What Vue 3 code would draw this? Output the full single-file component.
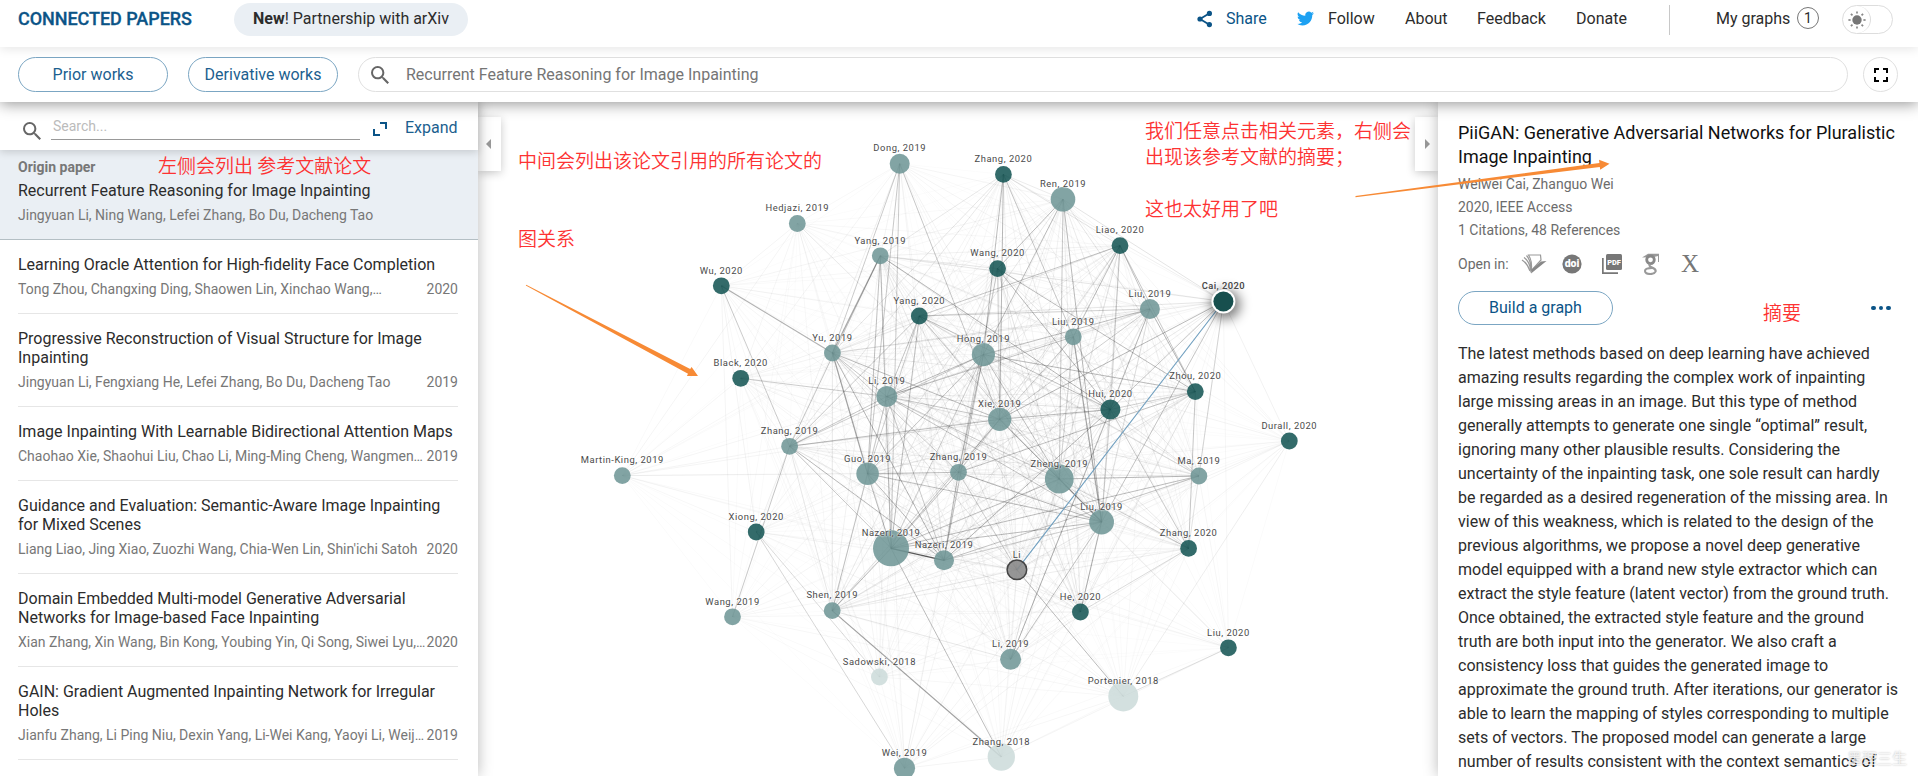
<template>
  <div class="page">
    <header class="topbar">
      <a class="brand">CONNECTED PAPERS</a>
      <a class="news"><b>New</b>! Partnership with arXiv</a>
      <nav class="nav">
        <a class="nav-link share">
          <svg width="16" height="18" viewBox="0 0 16 18">
            <path d="M12.5 3.2 3 9l9.5 5.8" fill="none" stroke="#0b5487" stroke-width="1.8" />
            <circle cx="12.4" cy="3.4" r="2.6" fill="#0b5487" />
            <circle cx="3" cy="9" r="2.6" fill="#0b5487" />
            <circle cx="12.4" cy="14.6" r="2.6" fill="#0b5487" />
          </svg>
          <span>Share</span>
        </a>
        <a class="nav-link follow">
          <svg width="17" height="17" viewBox="0 0 24 24">
            <path fill="#1da1f2" d="M23.95 4.57a10 10 0 0 1-2.82.77 4.96 4.96 0 0 0 2.16-2.72c-.95.55-2 .95-3.13 1.18a4.92 4.92 0 0 0-8.38 4.48C7.69 8.1 4.07 6.13 1.64 3.16a4.92 4.92 0 0 0 1.52 6.57 4.9 4.9 0 0 1-2.23-.61v.06a4.92 4.92 0 0 0 3.95 4.83 5 5 0 0 1-2.21.08 4.94 4.94 0 0 0 4.6 3.42A9.87 9.87 0 0 1 0 19.54a13.99 13.99 0 0 0 7.56 2.21c9.05 0 13.99-7.5 13.99-13.98 0-.21 0-.42-.02-.63a9.94 9.94 0 0 0 2.42-2.57z" />
          </svg>
          <span>Follow</span>
        </a>
        <a class="nav-link about">About</a>
        <a class="nav-link feedback">Feedback</a>
        <a class="nav-link donate">Donate</a>
        <span class="divider"></span>
        <a class="nav-link my-graphs">My graphs</a>
        <span class="count">1</span>
        <div class="theme-toggle">
          <div class="knob">
            <svg width="20" height="20" viewBox="-10 -10 20 20">
              <circle r="4.7" fill="#777" />
              <line v-for="n in 8" :key="n" x1="0" y1="-6.4" x2="0" y2="-8.6" stroke="#888" stroke-width="1.7" :transform="`rotate(${n * 45})`" />
            </svg>
          </div>
        </div>
      </nav>
    </header>

    <div class="toolbar">
      <button class="pill-btn">Prior works</button>
      <button class="pill-btn">Derivative works</button>
      <div class="search-box">
        <svg width="18" height="18" viewBox="3 3 17.5 17.5"><path :d="searchPath" fill="#666" /></svg>
        <span>Recurrent Feature Reasoning for Image Inpainting</span>
      </div>
      <button class="fullscreen">
        <svg width="14" height="14" viewBox="0 0 14 14">
          <path d="M1 5V1h4M9 1h4v4M13 9v4H9M5 13H1V9" fill="none" stroke="#000" stroke-width="2" />
        </svg>
      </button>
    </div>

    <main class="content">
      <aside class="sidebar">
        <div class="filter">
          <svg class="filter-icon" width="18" height="18" viewBox="3 3 17.5 17.5"><path :d="searchPath" fill="#666" /></svg>
          <div class="filter-input">Search...</div>
          <svg class="expand-icon" width="14" height="14" viewBox="0 0 14 14">
            <path d="M7 1h6v6M1 7v6h6" fill="none" stroke="#0b5487" stroke-width="2" />
          </svg>
          <a class="expand">Expand</a>
        </div>
        <div class="origin">
          <div class="origin-label">Origin paper</div>
          <div class="paper-title">Recurrent Feature Reasoning for Image Inpainting</div>
          <div class="paper-meta"><span>Jingyuan Li, Ning Wang, Lefei Zhang, Bo Du, Dacheng Tao</span></div>
        </div>
        <div class="papers">
          <div v-for="paper in papers" :key="paper.authors" class="paper">
            <div v-for="line in paper.title" :key="line" class="paper-title">{{ line }}</div>
            <div class="paper-meta">
              <span>{{ paper.authors }}</span>
              <span>{{ paper.year }}</span>
            </div>
          </div>
        </div>
      </aside>

      <section class="graph">
        <svg width="960" height="674" viewBox="478 102 960 674">
          <defs>
            <filter id="glow" x="-100%" y="-100%" width="300%" height="300%">
              <feGaussianBlur stdDeviation="6" />
            </filter>
          </defs>
          <line
            v-for="(edge, i) in edges"
            :key="i"
            :x1="edge.a.x"
            :y1="edge.a.y"
            :x2="edge.b.x"
            :y2="edge.b.y"
            stroke="#222"
            :stroke-opacity="edge.opacity"
            :stroke-width="edge.width"
          />
          <line :x1="byId.cai.x" :y1="byId.cai.y" :x2="byId.origin.x" :y2="byId.origin.y" stroke="#6f9fc0" stroke-width="1.1" />
          <circle :cx="byId.cai.x + 2" :cy="byId.cai.y + 3" r="15" fill="#000" opacity="0.5" filter="url(#glow)" />
          <circle :cx="byId.cai.x" :cy="byId.cai.y" r="12" fill="#fff" />
          <circle
            v-for="node in nodes"
            :key="node.id"
            :cx="node.x"
            :cy="node.y"
            :r="node.r"
            :class="['node', node.tone]"
          />
          <text
            v-for="node in nodes"
            :key="node.id + '-label'"
            :x="node.x"
            :y="node.y - 12.3"
            :class="['node-label', { selected: node.id === 'cai' }]"
          >{{ node.label }}</text>
        </svg>
        <button class="tab tab-left"><i class="caret caret-left"></i></button>
        <button class="tab tab-right"><i class="caret caret-right"></i></button>
      </section>

      <aside class="details">
        <h1><span>PiiGAN: Generative Adversarial Networks for Pluralistic</span><br />Image Inpainting</h1>
        <div class="detail-line">Weiwei Cai, Zhanguo Wei</div>
        <div class="detail-line">2020, IEEE Access</div>
        <div class="detail-line">1 Citations, 48 References</div>
        <div class="open-in">
          <span class="open-label">Open in:</span>
          <svg width="26" height="20" viewBox="0 0 26 20">
            <path d="M1 6q5 3 8 11M3 3.500q5 3 7 13M5.500 1.500q4 4 5 14" fill="none" stroke="#999" stroke-width="1.3" />
            <path d="M7.500 1h12l.5 5-10 11Q12 8 7.500 1z" fill="#fff" stroke="#999" stroke-width="1.2" />
            <path d="m10 19.500 15.500-12.500-5.500.5-9.500 8z" fill="#888" />
          </svg>
          <svg class="doi" width="20" height="20" viewBox="0 0 20 20">
            <circle cx="10" cy="10" r="9.6" fill="#777" />
            <text x="10" y="13.4" text-anchor="middle" font-size="10.5" font-weight="900" fill="#fff">doi</text>
          </svg>
          <svg class="pdf" width="20" height="20" viewBox="0 0 20 20">
            <path d="M.8 4v15.200H16" fill="none" stroke="#777" stroke-width="1.8" />
            <rect x="4" y="0" width="16" height="16" rx="1.5" fill="#777" />
            <text x="12" y="10.6" text-anchor="middle" font-size="7.4" font-weight="900" fill="#fff">PDF</text>
          </svg>
          <svg class="scholar" width="18" height="22" viewBox="0 0 18 22">
            <path d="M0 4.500 6 .8h11V9h-1V3l-4 1z" fill="#999" />
            <circle cx="8.500" cy="6.800" r="3.800" fill="#fff" stroke="#888" stroke-width="2.8" />
            <path d="M8 11q-1.500 2 1.500 3.200 5 2 4 4.500-1 2.300-5 2.300-5.500 0-5.500-3 0-3 7-3" fill="none" stroke="#999" stroke-width="2.1" />
          </svg>
          <span class="xmark">X</span>
        </div>
        <div class="actions">
          <button class="build">Build a graph</button>
          <span class="dots"><i></i><i></i><i></i></span>
        </div>
        <div class="abstract">
          <div v-for="line in abstractLines" :key="line">{{ line }}</div>
        </div>
      </aside>
    </main>

    <!-- annotations drawn over the page -->
    <div class="note note-sidebar">左侧会列出 参考文献论文</div>
    <div class="note note-graph">中间会列出该论文引用的所有论文的</div>
    <div class="note note-relation">图关系</div>
    <div class="note note-click">我们任意点击相关元素，右侧会<br />出现该参考文献的摘要；<br /><br />这也太好用了吧</div>
    <div class="note note-abstract">摘要</div>
    <svg class="arrows" width="1918" height="776" viewBox="0 0 1918 776">
      <path d="M525.800 285.600 688 373.800 686.900 376 698 376 691.600 366.900 690.200 369 526.200 284.800z" fill="#f78a35" />
      <path d="M1355.500 196 1599.400 163.100 1599 159.800 1609.500 163.700 1600.200 169.800 1599.800 167 1355.500 197.200z" fill="#f78a35" />
    </svg>
    <div class="watermark">墨理三生</div>
  </div>
</template>

<script setup>
const searchPath = 'M15.5 14h-.79l-.28-.27A6.47 6.47 0 0 0 16 9.500 6.500 6.500 0 1 0 9.500 16c1.610 0 3.090-.59 4.230-1.570l.27.28v.79l5 4.990L20.490 19l-4.990-5zm-6 0C7.010 14 5 11.990 5 9.500S7.010 5 9.500 5 14 7.010 14 9.500 11.990 14 9.500 14z'

const papers = [
  { title: ['Learning Oracle Attention for High-fidelity Face Completion'], authors: 'Tong Zhou, Changxing Ding, Shaowen Lin, Xinchao Wang,…', year: 2020 },
  { title: ['Progressive Reconstruction of Visual Structure for Image', 'Inpainting'], authors: 'Jingyuan Li, Fengxiang He, Lefei Zhang, Bo Du, Dacheng Tao', year: 2019 },
  { title: ['Image Inpainting With Learnable Bidirectional Attention Maps'], authors: 'Chaohao Xie, Shaohui Liu, Chao Li, Ming-Ming Cheng, Wangmen…', year: 2019 },
  { title: ['Guidance and Evaluation: Semantic-Aware Image Inpainting', 'for Mixed Scenes'], authors: "Liang Liao, Jing Xiao, Zuozhi Wang, Chia-Wen Lin, Shin'ichi Satoh", year: 2020 },
  { title: ['Domain Embedded Multi-model Generative Adversarial', 'Networks for Image-based Face Inpainting'], authors: 'Xian Zhang, Xin Wang, Bin Kong, Youbing Yin, Qi Song, Siwei Lyu,…', year: 2020 },
  { title: ['GAIN: Gradient Augmented Inpainting Network for Irregular', 'Holes'], authors: 'Jianfu Zhang, Li Ping Niu, Dexin Yang, Li-Wei Kang, Yaoyi Li, Weij…', year: 2019 },
]

const abstractLines = [
  'The latest methods based on deep learning have achieved',
  'amazing results regarding the complex work of inpainting',
  'large missing areas in an image. But this type of method',
  'generally attempts to generate one single “optimal” result,',
  'ignoring many other plausible results. Considering the',
  'uncertainty of the inpainting task, one sole result can hardly',
  'be regarded as a desired regeneration of the missing area. In',
  'view of this weakness, which is related to the design of the',
  'previous algorithms, we propose a novel deep generative',
  'model equipped with a brand new style extractor which can',
  'extract the style feature (latent vector) from the ground truth.',
  'Once obtained, the extracted style feature and the ground',
  'truth are both input into the generator. We also craft a',
  'consistency loss that guides the generated image to',
  'approximate the ground truth. After iterations, our generator is',
  'able to learn the mapping of styles corresponding to multiple',
  'sets of vectors. The proposed model can generate a large',
  'number of results consistent with the context semantics of',
]

// id, label, x, y, radius, tone
const nodes = [
  ['dong', 'Dong, 2019', 899.7, 163.7, 10, 'mid'],
  ['hedjazi', 'Hedjazi, 2019', 797.3, 223.5, 8.4, 'mid'],
  ['wu', 'Wu, 2020', 721.3, 285.8, 8.4, 'dark'],
  ['yang19', 'Yang, 2019', 880.3, 255.8, 8.4, 'mid'],
  ['yang20', 'Yang, 2020', 919.3, 316, 8.4, 'dark'],
  ['yu', 'Yu, 2019', 832.4, 353, 8.4, 'mid'],
  ['black', 'Black, 2020', 740.7, 378.3, 8.4, 'dark'],
  ['li19', 'Li, 2019', 886.8, 396.5, 10.5, 'mid'],
  ['zhang20', 'Zhang, 2020', 1003.4, 174.4, 8.4, 'dark'],
  ['ren', 'Ren, 2019', 1063, 199.3, 12.3, 'mid'],
  ['liao', 'Liao, 2020', 1120, 245.6, 8.4, 'dark'],
  ['wang20', 'Wang, 2020', 997.6, 268.6, 8.4, 'dark'],
  ['liuB', 'Liu, 2019', 1149.9, 309, 10, 'mid'],
  ['liuC', 'Liu, 2019', 1073.3, 336.8, 8.4, 'mid'],
  ['cai', 'Cai, 2020', 1223.4, 301.5, 10, 'picked'],
  ['hong', 'Hong, 2019', 983.4, 354.6, 11.6, 'mid'],
  ['xie', 'Xie, 2019', 999.7, 419.3, 11.6, 'mid'],
  ['hui', 'Hui, 2020', 1110.4, 409.5, 10, 'dark'],
  ['zhou', 'Zhou, 2020', 1195.3, 391.6, 8.4, 'dark'],
  ['durall', 'Durall, 2020', 1289.3, 441, 8.4, 'dark'],
  ['martin', 'Martin-King, 2019', 622.3, 475.6, 8.4, 'mid'],
  ['zhangA', 'Zhang, 2019', 789.6, 446.3, 8.4, 'mid'],
  ['guo', 'Guo, 2019', 867.6, 473.8, 11.3, 'mid'],
  ['zhangB', 'Zhang, 2019', 958.5, 472.3, 8.4, 'mid'],
  ['zheng', 'Zheng, 2019', 1059.3, 479, 14.4, 'mid'],
  ['ma', 'Ma, 2019', 1198.9, 476, 8.4, 'mid'],
  ['liuD', 'Liu, 2019', 1101.6, 522, 12.4, 'mid'],
  ['xiong', 'Xiong, 2020', 756.2, 532, 8.4, 'dark'],
  ['nazeri', 'Nazeri, 2019', 891, 548.3, 18, 'mid'],
  ['nazeriB', 'Nazeri, 2019', 944, 560.3, 10, 'mid'],
  ['zhang20B', 'Zhang, 2020', 1188.6, 548.4, 8.4, 'dark'],
  ['origin', 'Li', 1016.9, 569.8, 9.8, 'root'],
  ['wang19', 'Wang, 2019', 732.5, 616.8, 8.4, 'mid'],
  ['shen', 'Shen, 2019', 832.2, 610.6, 8.4, 'mid'],
  ['he', 'He, 2020', 1080.4, 612, 8.4, 'dark'],
  ['sadowski', 'Sadowski, 2018', 879.4, 677, 8.4, 'light'],
  ['li19B', 'Li, 2019', 1010.6, 659.3, 10.5, 'mid'],
  ['liu20', 'Liu, 2020', 1228.4, 647.8, 8.4, 'dark'],
  ['portenier', 'Portenier, 2018', 1123.3, 696.4, 15, 'light'],
  ['zhang18', 'Zhang, 2018', 1001.3, 757, 13.7, 'light'],
  ['wei', 'Wei, 2019', 904.5, 768.3, 10.6, 'mid'],
].map(([id, label, x, y, r, tone]) => ({ id, label, x, y, r, tone }))

const byId = Object.fromEntries(nodes.map((n) => [n.id, n]))

// closely related papers get a visibly darker line
const related = {
  dong: 'yu guo nazeri xie',
  wu: 'yu zhangA',
  yang19: 'yu zhangA guo nazeri hui',
  yang20: 'zhangA guo li19 liao hui nazeri liuB zheng',
  yu: 'guo li19 xie nazeriB zhangB',
  black: 'li19',
  li19: 'hong xie guo nazeriB zheng liuC zhangA liuD',
  zhang20: 'hong xie liuC',
  ren: 'wang20 yang20 hong zheng liuD',
  liao: 'hui zhou liuC liuB',
  wang20: 'xie zhou hui li19 yu zhangB',
  liuC: 'hui liuD zheng xie',
  liuB: 'hui xie zhou hong',
  cai: 'hui xie liuD',
  hong: 'guo nazeri zhangB nazeriB zheng zhangA zhou',
  xie: 'zheng liuD zhangB nazeri zhangA hui',
  hui: 'zhou zhang20B liuD li19B nazeriB',
  zhou: 'zhang20B zhangB',
  zhangA: 'nazeri nazeriB wang19',
  guo: 'nazeri nazeriB zhangB liuD shen',
  zhangB: 'nazeri nazeriB liuD origin',
  zheng: 'liuD nazeri zhang20B ma',
  liuD: 'nazeri nazeriB li19B he',
  ma: 'nazeri nazeriB',
  nazeri: 'shen zhang18',
  origin: 'portenier zhang20B',
}
const strong = { 'nazeri-nazeriB': 0.75, 'shen-zhang18': 0.42, 'yu-guo': 0.4, 'wu-yu': 0.35, 'zheng-liuD': 0.4, 'yang19-yu': 0.4, 'liuC-liuD': 0.4 }
const faint = { 'xiong-wei': 0.18, 'xiong-sadowski': 0.16, 'zhang20B-he': 0.16, 'liu20-portenier': 0.14, 'cai-durall': 0.06, 'durall-portenier': 0.08 }
const outer = ['martin', 'durall', 'liu20', 'wei', 'sadowski', 'wang19', 'hedjazi', 'portenier', 'wu', 'black', 'xiong', 'zhang18', 'dong']

const edges = []
nodes.forEach((a, i) => {
  nodes.slice(i + 1).forEach((b, j) => {
    const key = `${a.id}-${b.id}`
    const dist = Math.hypot(a.x - b.x, a.y - b.y)
    const seed = ((i * 37 + (i + j + 1) * 61 + i * j * 13) % 23) / 23
    if (strong[key]) {
      edges.push({ a, b, opacity: strong[key], width: 1.2 })
    } else if (related[a.id]?.split(' ').includes(b.id)) {
      edges.push({ a, b, opacity: 0.2 + seed * 0.13, width: 1 })
    } else if (faint[key]) {
      edges.push({ a, b, opacity: faint[key], width: 1 })
    } else if (dist < 430) {
      const isOuter = outer.includes(a.id) || outer.includes(b.id)
      edges.push({ a, b, opacity: (isOuter ? 0.015 : 0.03) + seed * seed * (isOuter ? 0.04 : 0.1), width: 1 })
    }
  })
})
</script>

<style>
body {
  overflow: hidden;
  background: #fff;
}
</style>

<style scoped>
.page {
  position: relative;
  width: 1918px;
  height: 776px;
  overflow: hidden;
  display: flex;
  flex-direction: column;
  font-family: Roboto, "Noto Sans CJK SC", sans-serif;
  font-size: 16px;
  color: #2c2c2c;
  background: #fff;
  white-space: nowrap;
}

button {
  font: inherit;
  padding: 0;
  box-sizing: border-box;
  background: #fff;
}

/* top bar */
.topbar {
  position: relative;
  z-index: 4;
  flex: none;
  box-sizing: border-box;
  height: 47px;
  padding: 3px 25px 11px 18px;
  display: flex;
  align-items: center;
  background: #fff;
  box-shadow: 0 2px 10px rgba(0, 0, 0, 0.1);
}

.brand {
  width: 216px;
  padding-bottom: 2px;
  font-size: 18px;
  font-weight: 500;
  -webkit-text-stroke: 0.3px #0b5487;
  letter-spacing: -0.05px;
  color: #0b5487;
}

.news {
  width: 234px;
  height: 33px;
  line-height: 32px;
  border-radius: 17px;
  text-align: center;
  background: #eaeff4;
}

.nav {
  flex: 1;
  display: flex;
  align-items: center;
  justify-content: flex-end;
}

.nav-link {
  display: flex;
  align-items: center;
  padding-bottom: 2px;
}

.share {
  width: 100px;
  gap: 13px;
  color: #0b5487;
}

.follow {
  width: 108px;
  gap: 14px;
}

.about { width: 72px; }
.feedback { width: 99px; }
.donate { width: 93px; }

.divider {
  width: 1px;
  height: 30px;
  margin-right: 46px;
  background: #c8c8c8;
}

.my-graphs { width: 81px; }

.count {
  box-sizing: border-box;
  width: 22px;
  height: 22px;
  margin: 0 23px 3px 0;
  line-height: 20px;
  text-align: center;
  font-size: 14px;
  border: 1px solid #777;
  border-radius: 50%;
}

.theme-toggle {
  box-sizing: border-box;
  width: 51px;
  height: 29px;
  border: 1px solid #ddd;
  border-radius: 15px;
}

.knob {
  box-sizing: border-box;
  width: 28px;
  height: 27px;
  display: flex;
  align-items: center;
  justify-content: center;
  border-right: 1px solid #ddd;
  border-radius: 50%;
}

.knob svg {
  flex: none;
}

/* toolbar */
.toolbar {
  position: relative;
  z-index: 3;
  flex: none;
  box-sizing: border-box;
  height: 55px;
  padding: 0 20px 0 18px;
  display: flex;
  align-items: center;
  background: #fff;
  box-shadow: 0 2px 14px rgba(0, 0, 0, 0.42);
}

.pill-btn {
  width: 150px;
  height: 35px;
  margin-right: 20px;
  border: 1px solid #7ba6c3;
  border-radius: 18px;
  color: #1c5f8f;
}

.search-box {
  box-sizing: border-box;
  flex: 1;
  height: 35px;
  margin-right: 15px;
  padding-left: 12px;
  display: flex;
  align-items: center;
  gap: 17px;
  border: 1px solid #e0e0e0;
  border-radius: 18px;
  color: #757575;
}

.fullscreen {
  width: 35px;
  height: 35px;
  display: flex;
  align-items: center;
  justify-content: center;
  border: 1px solid #e0e0e0;
  border-radius: 50%;
}

.content {
  flex: 1;
  min-height: 0;
  display: flex;
}

/* sidebar */
.sidebar {
  position: relative;
  z-index: 1;
  flex: none;
  width: 478px;
  background: #fff;
  box-shadow: 0 0 14px rgba(0, 0, 0, 0.28);
}

.filter {
  position: relative;
  box-sizing: border-box;
  height: 48px;
  padding-left: 23px;
  display: flex;
  box-shadow: 0 2px 8px rgba(0, 0, 0, 0.16);
}

.filter-icon {
  margin-top: 20px;
}

.filter-input {
  box-sizing: border-box;
  width: 309px;
  height: 38px;
  margin-left: 10px;
  padding: 14px 0 0 2px;
  font-size: 14px;
  line-height: 20px;
  color: #bbb;
  border-bottom: 1px solid #999;
}

.expand-icon {
  margin: 20px 18px 0 13px;
}

.expand {
  padding-top: 16px;
  line-height: 20px;
  color: #1c5f8f;
}

.origin {
  box-sizing: border-box;
  height: 90px;
  padding: 8px 20px 0 18px;
  background: #eaeff4;
  border-bottom: 1px solid #b4bfc4;
}

.origin-label {
  height: 23px;
  line-height: 18px;
  font-size: 14px;
  font-weight: 700;
  color: #777;
}

.paper-title {
  line-height: 19px;
}

.paper-meta {
  display: flex;
  justify-content: space-between;
  margin-top: 6px;
  line-height: 18px;
  font-size: 14px;
  color: #777;
}

.papers {
  padding: 0 20px 0 18px;
}

.paper {
  padding: 15px 0;
  border-bottom: 1px solid #e6e6e6;
}

/* graph */
.graph {
  position: relative;
  flex: none;
  width: 960px;
}

.graph svg {
  display: block;
}

.node.mid { fill: #6f9696; fill-opacity: 0.87; }
.node.dark { fill: #175655; fill-opacity: 0.88; }
.node.light { fill: #cddbda; fill-opacity: 0.87; }
.node.picked { fill: #174f4e; }
.node.root { fill: #888; fill-opacity: 0.88; stroke: #444; stroke-width: 1.5; }

.node-label {
  font-size: 9.4px;
  letter-spacing: 0.55px;
  text-anchor: middle;
  fill: #4a4a4a;
  text-shadow: 0 0 2px #fff, 0 0 2px #fff;
}

.node-label.selected {
  font-weight: 600;
  letter-spacing: 0.4px;
}

.tab {
  position: absolute;
  top: 15px;
  width: 23px;
  height: 54px;
  display: flex;
  align-items: center;
  justify-content: center;
  border: 0;
  box-shadow: 0 2px 10px rgba(0, 0, 0, 0.22);
}

.tab-left {
  left: 0;
  padding-right: 3px;
}

.tab-right {
  right: 0;
  padding-left: 2px;
}

.caret {
  border: 5px solid transparent;
}

.caret-left {
  border-left-width: 0;
  border-right-color: #999;
}

.caret-right {
  border-right-width: 0;
  border-left-color: #999;
}

/* details */
.details {
  position: relative;
  flex: none;
  box-sizing: border-box;
  width: 480px;
  padding: 19px 20px 0 20px;
  background: #fff;
  box-shadow: 0 0 14px rgba(0, 0, 0, 0.28);
}

h1 {
  margin: 0 0 4px;
  font-size: 18px;
  line-height: 24px;
  font-weight: 400;
  color: #111;
}

.detail-line {
  line-height: 23px;
  font-size: 14px;
  color: #6c6c6c;
}

.open-in {
  height: 43px;
  display: flex;
  align-items: center;
  font-size: 14px;
  color: #6c6c6c;
}

.open-label { width: 63px; }
.doi { margin-left: 15px; }
.pdf { margin-left: 20px; }
.scholar { margin-left: 20px; }

.xmark {
  margin-left: 21px;
  font-family: "Liberation Serif", serif;
  font-size: 25px;
  line-height: 24px;
  color: #777;
}

.actions {
  margin-top: 6px;
  height: 34px;
  padding-right: 7px;
  display: flex;
  align-items: center;
  justify-content: space-between;
}

.build {
  width: 155px;
  height: 34px;
  padding-bottom: 2px;
  border: 1px solid #7ba6c3;
  border-radius: 17px;
  color: #0b5487;
}

.dots {
  display: flex;
  gap: 3px;
}

.dots i {
  width: 4.6px;
  height: 4.6px;
  border-radius: 50%;
  background: #0b5487;
}

.abstract {
  margin-top: 17px;
  line-height: 24px;
}

/* annotations */
.note {
  position: absolute;
  z-index: 5;
  font-family: "Noto Sans CJK SC", sans-serif;
  font-size: 19px;
  line-height: 26px;
  font-weight: 350;
  color: #fd3232;
}

.note-sidebar { left: 158px; top: 152px; }
.note-graph { left: 518px; top: 147px; }
.note-relation { left: 518px; top: 225px; }
.note-click { left: 1145px; top: 117px; }
.note-abstract { left: 1763px; top: 299px; }

.arrows {
  position: absolute;
  z-index: 5;
  left: 0;
  top: 0;
}

.watermark {
  position: absolute;
  z-index: 5;
  left: 1847px;
  top: 748px;
  font-size: 15px;
  line-height: 22px;
  color: rgba(255, 255, 255, 0.75);
  text-shadow: 0 0 2px rgba(0, 0, 0, 0.3);
}
</style>
